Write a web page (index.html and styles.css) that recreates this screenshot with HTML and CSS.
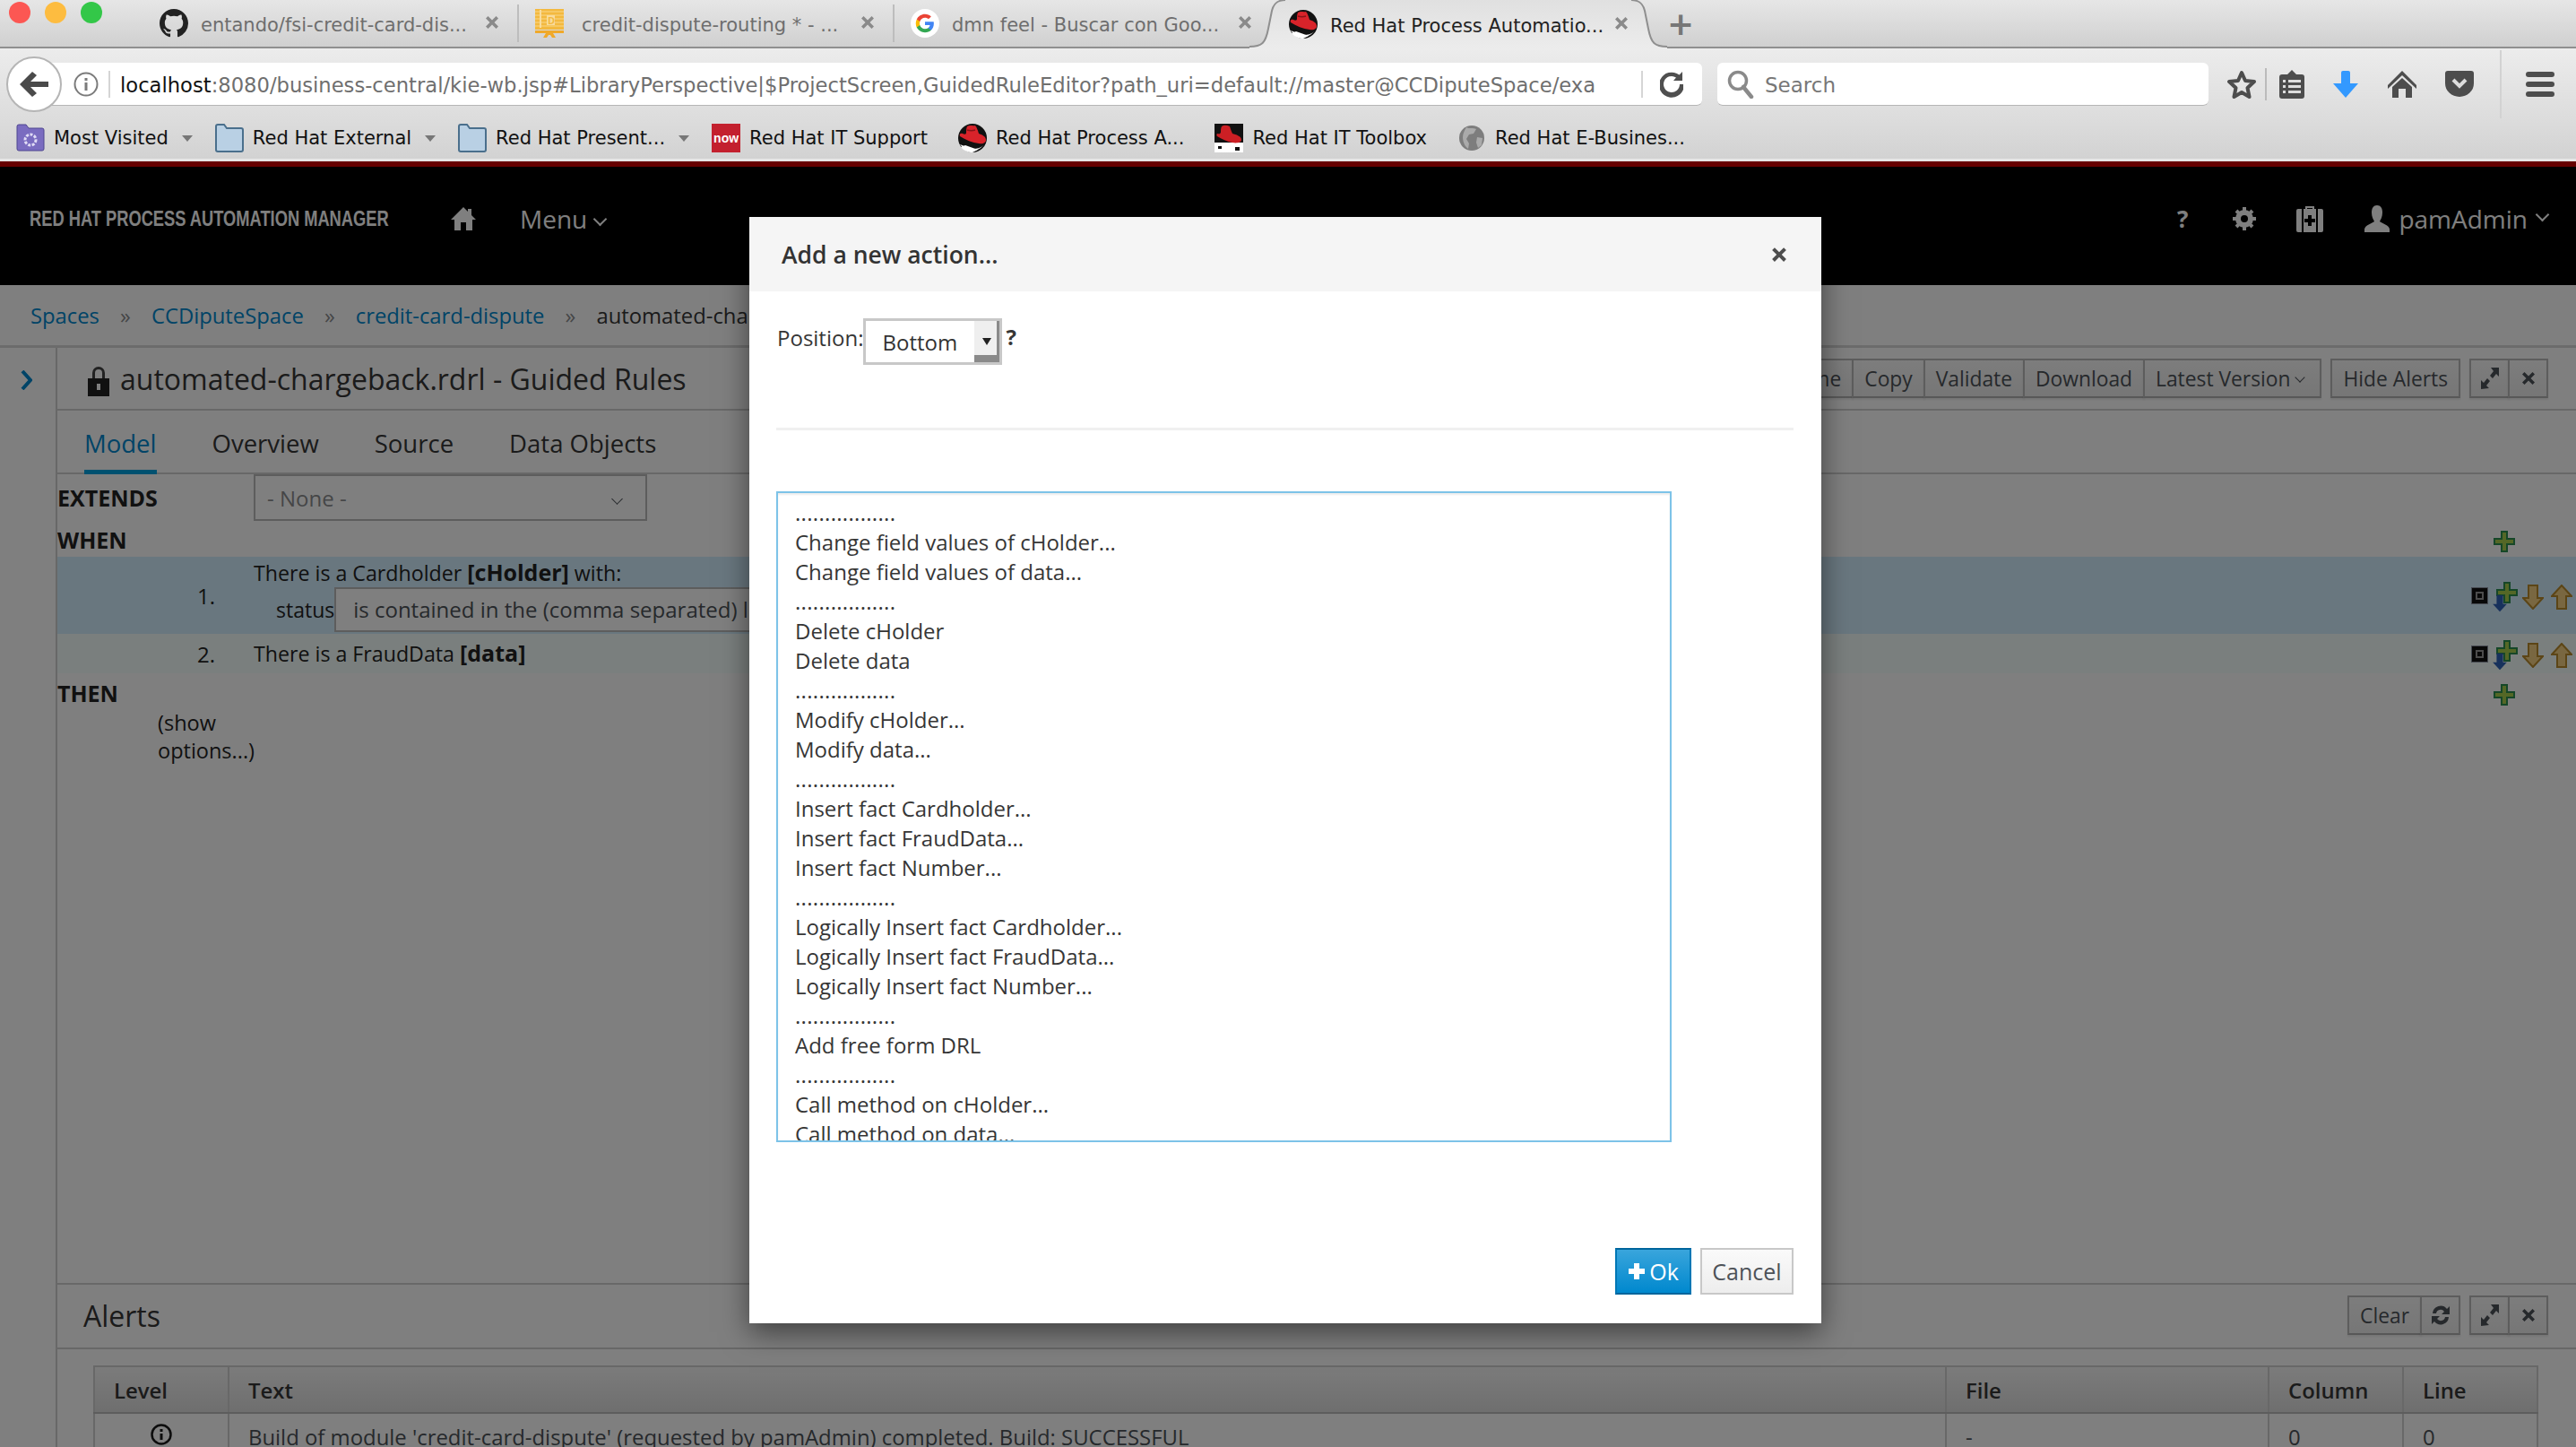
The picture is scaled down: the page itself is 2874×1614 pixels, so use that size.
FILE: index.html
```html
<!DOCTYPE html>
<html>
<head>
    <title>Red Hat Process Automation Manager</title>
    <link rel="stylesheet" href="styles.css">
</head>
<body>
    <svg class="sprite" xmlns="http://www.w3.org/2000/svg">
        <symbol id="i-github" viewBox="0 0 16 16">
            <path fill="#222" d="M8 0C3.58 0 0 3.58 0 8c0 3.54 2.29 6.53 5.47 7.59.4.07.55-.17.55-.38 0-.19-.01-.82-.01-1.49-2.01.37-2.53-.49-2.69-.94-.09-.23-.48-.94-.82-1.13-.28-.15-.68-.52-.01-.53.63-.01 1.08.58 1.23.82.72 1.21 1.87.87 2.33.66.07-.52.28-.87.51-1.07-1.78-.2-3.64-.89-3.64-3.95 0-.87.31-1.59.82-2.15-.08-.2-.36-1.02.08-2.12 0 0 .67-.21 2.2.82.64-.18 1.32-.27 2-.27.68 0 1.36.09 2 .27 1.53-1.04 2.2-.82 2.2-.82.44 1.1.16 1.92.08 2.12.51.56.82 1.27.82 2.15 0 3.07-1.87 3.75-3.65 3.95.29.25.54.73.54 1.48 0 1.07-.01 1.93-.01 2.2 0 .21.15.46.55.38A8.013 8.013 0 0016 8c0-4.42-3.58-8-8-8z"/>
        </symbol>
        <symbol id="i-slides" viewBox="0 0 32 32">
            <rect x="0" y="0" width="32" height="23" fill="#f3b93f"/>
            <path d="M0 3h32M0 7h32M0 11h32M0 15h32M0 19h32" stroke="#f7cd72" stroke-width="1.500"/>
            <rect x="5" y="1" width="2" height="20" fill="#f9dc9c"/>
            <rect x="13" y="7" width="9" height="11" fill="#f9dc9c"/>
            <text x="14" y="17" font-size="11" font-weight="bold" font-family="Open Sans" fill="#f3b93f">D</text>
            <rect x="0" y="24" width="32" height="3" fill="#f0a92a"/>
            <path d="M12 27l-3 5h4l2-3h2l2 3h4l-3-5z" fill="#f0a92a"/>
        </symbol>
        <symbol id="i-google" viewBox="0 0 48 48">
            <circle cx="24" cy="24" r="24" fill="#fff"/>
            <g transform="translate(7.2 7.2) scale(.7)">
                <path fill="#4285f4" d="M45.12 24.5c0-1.56-.14-3.06-.4-4.5H24v8.51h11.84c-.51 2.75-2.06 5.08-4.39 6.64v5.52h7.11c4.16-3.83 6.56-9.47 6.56-16.17z"/>
                <path fill="#34a853" d="M24 46c5.94 0 10.92-1.97 14.56-5.33l-7.11-5.52c-1.97 1.32-4.49 2.1-7.45 2.1-5.73 0-10.58-3.87-12.31-9.07H4.34v5.7C7.96 41.07 15.4 46 24 46z"/>
                <path fill="#fbbc05" d="M11.69 28.18C11.25 26.86 11 25.45 11 24s.25-2.86.69-4.18v-5.7H4.34C2.85 17.09 2 20.45 2 24c0 3.55.85 6.91 2.34 9.88l7.35-5.7z"/>
                <path fill="#ea4335" d="M24 10.75c3.23 0 6.13 1.11 8.41 3.29l6.31-6.31C34.91 4.18 29.93 2 24 2 15.4 2 7.96 6.93 4.34 14.12l7.35 5.7c1.73-5.2 6.58-9.07 12.31-9.07z"/>
            </g>
        </symbol>
        <symbol id="i-redhat" viewBox="0 0 32 32">
            <circle cx="16" cy="16" r="16" fill="#111"/>
            <path d="M2 23c5 2 10 4 15 5 4 0 8-1 11-4a16 16 0 0 1-26-1z" fill="#fff"/>
            <path d="M3 26l5-2 14 5-6 3c-5 0-10-2-13-6z" fill="#fff"/>
            <path d="M10 3c3-2 6 0 9-1 2 2 3 6 4 9 3 1 8 3 8 7 0 3-3 5-8 4-7-1-15-4-21-8-1-3 1-4 3-3 2 1 4 1 4-1 0-2 0-5 1-7z" fill="#d8232a"/>
            <path d="M10 7c3 1 6 1 9 0" fill="none" stroke="#8a1418" stroke-width="1.500"/>
        </symbol>
        <symbol id="i-redhat-square" viewBox="0 0 32 32">
            <rect width="32" height="32" fill="#111"/>
            <path d="M0 21h32v11H0z" fill="#fff"/>
            <path d="M23 26h5v4h-5zM4 25h4v3H4z" fill="#111"/>
            <path d="M8 3c3-2 6-1 9 0 1 3 2 6 3 8 4 1 10 3 10 7 0 3-5 4-10 3-6-1-12-4-17-7-1-1-1-3 1-3 1 1 3 0 3-2 0-2 0-4 1-6z" fill="#cc1f24"/>
        </symbol>
        <symbol id="i-home" viewBox="0 0 28 28">
            <path d="M14 1L0 15h4v12h7v-9h6v9h7V15h4l-5-5V3h-4v3z"/>
        </symbol>
        <symbol id="i-plus" viewBox="0 0 24 24">
            <path d="M9 1h6v8h8v6h-8v8H9v-8H1V9h8z" fill="#a9cf4d" stroke="#2d8f50" stroke-width="2"/>
        </symbol>
        <symbol id="i-down" viewBox="0 0 24 28">
            <path d="M7 1h10v14h6L12 27 1 15h6z" fill="#f3cf83" stroke="#b88a2c" stroke-width="2"/>
        </symbol>
        <symbol id="i-expand" viewBox="0 0 22 26">
            <path d="M12 1h9v10l-3-3-4 5-3-3 4-5zM1 25v-10l3 3 4-5 3 3-4 5 3 3z" fill="#4d5258"/>
        </symbol>
        <symbol id="i-close" viewBox="0 0 16 16">
            <path d="M1 3.500L3.500 1 8 5.500 12.500 1 15 3.500 10.500 8 15 12.500 12.500 15 8 10.500 3.500 15 1 12.500 5.500 8z"/>
        </symbol>
        <symbol id="i-folder" viewBox="0 0 32 32">
            <path d="M1 3a2 2 0 0 1 2-2h7l3 4h16a2 2 0 0 1 2 2v22a2 2 0 0 1-2 2H3a2 2 0 0 1-2-2z" fill="#b9d0e4" stroke="#4a6f8c" stroke-width="2"/>
        </symbol>
    </svg>

    <div class="browser">
        <div class="tabstrip">
            <div class="lights">
                <span class="light light-red"></span>
                <span class="light light-yellow"></span>
                <span class="light light-green"></span>
            </div>
            <div class="tab tab-first">
                <svg class="tab-icon"><use href="#i-github"/></svg>
                <span class="tab-title">entando/fsi-credit-card-dis...</span>
                <svg class="tab-close"><use href="#i-close"/></svg>
            </div>
            <div class="tab">
                <svg class="tab-icon"><use href="#i-slides"/></svg>
                <span class="tab-title tab-title-wide">credit-dispute-routing * - ...</span>
                <svg class="tab-close"><use href="#i-close"/></svg>
            </div>
            <div class="tab tab-plain">
                <svg class="tab-icon"><use href="#i-google"/></svg>
                <span class="tab-title">dmn feel - Buscar con Goo...</span>
                <svg class="tab-close"><use href="#i-close"/></svg>
            </div>
            <div class="tab tab-active">
                <svg class="tab-shape" viewBox="0 0 466 54" preserveAspectRatio="none">
                    <defs>
                        <linearGradient id="tabfill" x1="0" y1="0" x2="0" y2="1">
                            <stop offset="0" stop-color="#e0e0e0"/>
                            <stop offset="1" stop-color="#ececec"/>
                        </linearGradient>
                    </defs>
                    <path d="M0 52c14 0 18-4 21-20l4-20C27 4 31 0 40 0h386c9 0 13 4 15 12l4 20c3 16 7 20 21 20v2H0z" fill="url(#tabfill)"/>
                    <path d="M0 52c14 0 18-4 21-20l4-20C27 4 31 0 40 0M426 0c9 0 13 4 15 12l4 20c3 16 7 20 21 20" fill="none" stroke="#8f8f8f" stroke-width="2"/>
                </svg>
                <svg class="tab-icon"><use href="#i-redhat"/></svg>
                <span class="tab-title">Red Hat Process Automatio...</span>
                <svg class="tab-close"><use href="#i-close"/></svg>
            </div>
            <span class="new-tab">+</span>
        </div>

        <div class="navbar">
            <div class="back-btn">
                <svg width="36" height="32" viewBox="0 0 36 32"><path d="M16 2l5 4-7 7h20v6H14l7 7-5 4L2 16z" fill="#4a4a4a"/></svg>
            </div>
            <div class="urlbar">
                <svg class="info-icon" width="28" height="28" viewBox="0 0 28 28"><circle cx="14" cy="14" r="12.500" fill="none" stroke="#7b7b7b" stroke-width="2"/><path d="M12.500 7h3v3h-3zM12.500 12h3v9h-3z" fill="#7b7b7b"/></svg>
                <span class="url-sep"></span>
                <span class="url-text"><b>localhost</b>:8080/business-central/kie-wb.jsp#LibraryPerspective|$ProjectScreen,GuidedRuleEditor?path_uri=default://master@CCDiputeSpace/example</span>
                <span class="url-sep url-sep-right"></span>
                <svg class="reload-icon" width="26" height="30" viewBox="0 0 26 30"><path d="M22 15a9 9 0 1 1-4-7.500L15 11h10V1l-3.500 3.500A14 14 0 1 0 27 15z" fill="#4f4f4f"/></svg>
            </div>
            <div class="searchbar">
                <svg width="30" height="32" viewBox="0 0 30 32"><circle cx="12" cy="12" r="9.500" fill="none" stroke="#8a8a8a" stroke-width="3.500"/><path d="M18 19l9 11" stroke="#8a8a8a" stroke-width="4.500" stroke-linecap="round"/></svg>
                <span>Search</span>
            </div>
            <div class="nav-icons">
                <svg class="nav-star" width="32" height="32" viewBox="0 0 32 32"><path d="M16 3l4 9 10 1-7.500 7 2 10L16 25l-8.500 5 2-10L2 13l10-1z" fill="none" stroke="#4d4d4d" stroke-width="4" stroke-linejoin="round"/></svg>
                <span class="nav-sep"></span>
                <svg class="nav-list" width="28" height="32" viewBox="0 0 28 32"><path d="M14 0l5 5h6a3 3 0 0 1 3 3v21a3 3 0 0 1-3 3H3a3 3 0 0 1-3-3V8a3 3 0 0 1 3-3h6z" fill="#4d4d4d"/><path d="M4 11h3v3H4zM10 11h14v3H10zM4 17h3v3H4zM10 17h14v3H10zM4 23h3v3H4zM10 23h14v3H10z" fill="#ddd"/></svg>
                <svg class="nav-down" width="30" height="30" viewBox="0 0 30 30"><path d="M10 2a2 2 0 0 1 2-2h6a2 2 0 0 1 2 2v12h9L15 30 1 14h9z" fill="#3399ff"/></svg>
                <svg class="nav-home" width="32" height="30" viewBox="0 0 32 30"><path d="M16 0L0 16v4L16 5l16 15v-4zM16 8L5 18v12h7V20h8v10h7V18z" fill="#4d4d4d"/></svg>
                <svg class="nav-pocket" width="32" height="30" viewBox="0 0 32 30"><path d="M3 0h26a3 3 0 0 1 3 3v11a16 15 0 0 1-32 0V3a3 3 0 0 1 3-3z" fill="#4d4d4d"/><path d="M9 10l7 7 7-7" fill="none" stroke="#ddd" stroke-width="4"/></svg>
                <span class="nav-sep nav-sep-tall"></span>
                <div class="hamburger"><span></span><span></span><span></span></div>
            </div>
        </div>

        <div class="bookmarks">
            <div class="bookmark bookmark-menu">
                <svg class="bm-icon" viewBox="0 0 32 32"><path d="M1 3a2 2 0 0 1 2-2h8l3 4h15a2 2 0 0 1 2 2v21a2 2 0 0 1-2 2H3a2 2 0 0 1-2-2z" fill="#7a6cc0" stroke="#4f4690"/><circle cx="16" cy="18" r="6" fill="none" stroke="#e0dcf5" stroke-width="3" stroke-dasharray="3 1.500"/></svg>
                <span>Most Visited</span><i class="caret"></i>
            </div>
            <div class="bookmark bookmark-menu">
                <svg class="bm-icon"><use href="#i-folder"/></svg>
                <span>Red Hat External</span><i class="caret"></i>
            </div>
            <div class="bookmark bookmark-menu">
                <svg class="bm-icon"><use href="#i-folder"/></svg>
                <span>Red Hat Present...</span><i class="caret"></i>
            </div>
            <div class="bookmark">
                <span class="now-icon">now</span>
                <span>Red Hat IT Support</span>
            </div>
            <div class="bookmark">
                <svg class="bm-icon"><use href="#i-redhat"/></svg>
                <span>Red Hat Process A...</span>
            </div>
            <div class="bookmark">
                <svg class="bm-icon"><use href="#i-redhat-square"/></svg>
                <span>Red Hat IT Toolbox</span>
            </div>
            <div class="bookmark">
                <svg class="bm-icon" viewBox="0 0 32 32"><circle cx="16" cy="16" r="14" fill="#7d7d7d"/><path d="M10 4c3 2 8 0 11 2l-3 5-5 1-3 5 3 5-1 6c-4-3-6-8-6-13 0-4 2-8 4-11zM22 15l6 1-1 8-4 3-2-6z" fill="#aaa"/></svg>
                <span>Red Hat E-Busines...</span>
            </div>
        </div>
    </div>

    <div class="app">
        <div class="masthead">
            <span class="brand">RED HAT PROCESS AUTOMATION MANAGER</span>
            <svg class="mast-home"><use href="#i-home"/></svg>
            <span class="mast-menu">Menu<i class="chev"></i></span>
            <div class="mast-right">
                <span class="mast-help">?</span>
                <svg class="mast-gear" width="26" height="26" viewBox="0 0 26 26"><circle cx="13" cy="13" r="7" fill="none" stroke="#fff" stroke-width="6"/><path d="M13 0v26M0 13h26M4 4l18 18M22 4L4 22" stroke="#fff" stroke-width="4" stroke-dasharray="5 16 5 0"/></svg>
                <svg class="mast-case" width="30" height="30" viewBox="0 0 30 30"><path d="M10 4V1h10v3h8a2 2 0 0 1 2 2v22a2 2 0 0 1-2 2H2a2 2 0 0 1-2-2V6a2 2 0 0 1 2-2zm2 0h6V3h-6zM6 4v26h2V4zM22 4v26h2V4zM13 11v4H9v4h4v4h4v-4h4v-4h-4v-4z" fill="#fff" fill-rule="evenodd"/></svg>
                <span class="mast-user">
                    <svg width="28" height="30" viewBox="0 0 28 30"><path d="M14 0c4 0 6 3 6 8s-2 8-3 10c2 2 11 4 11 9v3H0v-3c0-5 9-7 11-9-1-2-3-5-3-10s2-8 6-8z" fill="#fff"/></svg>
                    pamAdmin<i class="chev"></i>
                </span>
            </div>
        </div>

        <div class="crumbs">
            <a>Spaces</a><span class="crumb-sep">&raquo;</span>
            <a>CCDiputeSpace</a><span class="crumb-sep">&raquo;</span>
            <a>credit-card-dispute</a><span class="crumb-sep">&raquo;</span>
            <span class="crumb-current">automated-chargeback.rdrl</span>
        </div>

        <div class="workbench">
            <div class="rail">
                <svg width="14" height="22" viewBox="0 0 14 22"><path d="M3 1l9 10-9 10" fill="none" stroke="#0088ce" stroke-width="4"/></svg>
            </div>
            <div class="editor">
                <div class="title-row">
                    <svg class="lock" width="24" height="34" viewBox="0 0 24 34"><path d="M5 14V8a7 7 0 0 1 14 0v6h-3V8a4 4 0 0 0-8 0v6z" fill="#444"/><path d="M0 14h24v20H0zM10 20v7h4v-7z" fill="#222" fill-rule="evenodd"/></svg>
                    <span class="doc-title">automated-chargeback.rdrl - Guided Rules</span>
                    <div class="toolbar">
                        <div class="btn-group">
                            <span class="btn">Rename</span><span class="btn">Copy</span><span class="btn">Validate</span><span class="btn">Download</span><span class="btn">Latest Version<i class="chev chev-dark"></i></span>
                        </div>
                        <span class="btn">Hide Alerts</span>
                        <div class="btn-group">
                            <span class="btn btn-icon"><svg width="22" height="26"><use href="#i-expand"/></svg></span><span class="btn btn-icon"><svg class="x-icon" width="16" height="16"><use href="#i-close"/></svg></span>
                        </div>
                    </div>
                </div>

                <div class="tabs">
                    <span class="tabs-item tabs-item-on">Model</span>
                    <span class="tabs-item">Overview</span>
                    <span class="tabs-item">Source</span>
                    <span class="tabs-item">Data Objects</span>
                </div>

                <div class="rule">
                    <div class="rule-extends">
                        <b class="rule-label">EXTENDS</b>
                        <div class="none-select">- None -<i class="chev chev-dark"></i></div>
                    </div>
                    <div class="rule-heading">
                        <b class="rule-label">WHEN</b>
                        <svg class="rule-add" width="24" height="24"><use href="#i-plus"/></svg>
                    </div>
                    <div class="rule-line rule-line-blue">
                        <span class="rule-num">1.</span>
                        <div class="rule-body">
                            <div class="rule-text">There is a Cardholder <b>[cHolder]</b> with:</div>
                            <div class="rule-field">
                                <span class="rule-field-name">status</span>
                                <div class="rule-input">is contained in the (comma separated) list</div>
                            </div>
                        </div>
                        <div class="rule-actions">
                            <span class="mini-minus"></span>
                            <span class="plus-down">
                                <svg class="pd-plus" width="24" height="24"><use href="#i-plus"/></svg>
                                <svg class="pd-arrow" width="18" height="20" viewBox="0 0 24 28"><path d="M7 1h10v14h6L12 27 1 15h6z" fill="#2f62b8"/></svg>
                            </span>
                            <svg class="arrow-down" width="24" height="28"><use href="#i-down"/></svg>
                            <svg class="arrow-up" width="24" height="28"><use href="#i-down"/></svg>
                        </div>
                    </div>
                    <div class="rule-line rule-line-green">
                        <span class="rule-num">2.</span>
                        <div class="rule-body">
                            <div class="rule-text">There is a FraudData <b>[data]</b></div>
                        </div>
                        <div class="rule-actions">
                            <span class="mini-minus"></span>
                            <span class="plus-down">
                                <svg class="pd-plus" width="24" height="24"><use href="#i-plus"/></svg>
                                <svg class="pd-arrow" width="18" height="20" viewBox="0 0 24 28"><path d="M7 1h10v14h6L12 27 1 15h6z" fill="#2f62b8"/></svg>
                            </span>
                            <svg class="arrow-down" width="24" height="28"><use href="#i-down"/></svg>
                            <svg class="arrow-up" width="24" height="28"><use href="#i-down"/></svg>
                        </div>
                    </div>
                    <div class="rule-heading rule-heading-then">
                        <b class="rule-label">THEN</b>
                        <svg class="rule-add" width="24" height="24"><use href="#i-plus"/></svg>
                    </div>
                    <div class="rule-options">(show options...)</div>
                </div>

                <div class="alerts">
                    <div class="alerts-head">
                        <span class="alerts-title">Alerts</span>
                        <div class="toolbar">
                            <div class="btn-group">
                                <span class="btn">Clear</span><span class="btn btn-icon"><svg width="24" height="26" viewBox="0 0 24 26"><path d="M3 11a9 9 0 0 1 16-5l3-3v9h-9l3-3a5 5 0 0 0-9 2zM21 15a9 9 0 0 1-16 5l-3 3v-9h9l-3 3a5 5 0 0 0 9-2z" fill="#4d5258"/></svg></span>
                            </div>
                            <div class="btn-group">
                                <span class="btn btn-icon"><svg width="22" height="26"><use href="#i-expand"/></svg></span><span class="btn btn-icon"><svg class="x-icon" width="16" height="16"><use href="#i-close"/></svg></span>
                            </div>
                        </div>
                    </div>
                    <table class="alerts-table">
                        <tr>
                            <th class="col-level">Level</th>
                            <th>Text</th>
                            <th class="col-file">File</th>
                            <th class="col-num">Column</th>
                            <th class="col-num">Line</th>
                        </tr>
                        <tr>
                            <td class="cell-center"><svg width="24" height="24" viewBox="0 0 24 24"><circle cx="12" cy="12" r="10.500" fill="none" stroke="#1b1b1b" stroke-width="2.500"/><path d="M10.500 6h3v3h-3zM10.500 11h3v7h-3z" fill="#1b1b1b"/></svg></td>
                            <td>Build of module 'credit-card-dispute' (requested by pamAdmin) completed. Build: SUCCESSFUL</td>
                            <td>-</td>
                            <td>0</td>
                            <td>0</td>
                        </tr>
                    </table>
                </div>
            </div>
        </div>

        <div class="backdrop">
            <div class="modal">
                <div class="modal-head">
                    <span class="modal-title">Add a new action...</span>
                    <svg class="modal-x" width="18" height="18"><use href="#i-close"/></svg>
                </div>
                <div class="modal-body">
                    <div class="position-row">
                        <span class="position-label">Position:</span>
                        <div class="old-select">
                            <span class="old-select-value">Bottom</span>
                            <span class="old-select-btn"></span>
                        </div>
                        <b class="position-help">?</b>
                    </div>
                    <div class="modal-rule"></div>
                    <div class="listbox">
                        <div class="opt opt-sep">.................</div>
                        <div class="opt">Change field values of cHolder...</div>
                        <div class="opt">Change field values of data...</div>
                        <div class="opt opt-sep">.................</div>
                        <div class="opt">Delete cHolder</div>
                        <div class="opt">Delete data</div>
                        <div class="opt opt-sep">.................</div>
                        <div class="opt">Modify cHolder...</div>
                        <div class="opt">Modify data...</div>
                        <div class="opt opt-sep">.................</div>
                        <div class="opt">Insert fact Cardholder...</div>
                        <div class="opt">Insert fact FraudData...</div>
                        <div class="opt">Insert fact Number...</div>
                        <div class="opt opt-sep">.................</div>
                        <div class="opt">Logically Insert fact Cardholder...</div>
                        <div class="opt">Logically Insert fact FraudData...</div>
                        <div class="opt">Logically Insert fact Number...</div>
                        <div class="opt opt-sep">.................</div>
                        <div class="opt">Add free form DRL</div>
                        <div class="opt opt-sep">.................</div>
                        <div class="opt">Call method on cHolder...</div>
                        <div class="opt">Call method on data...</div>
                    </div>
                    <div class="modal-foot">
                        <span class="btn-ok"><svg width="20" height="20" viewBox="0 0 20 20"><path d="M7 1h6v6h6v6h-6v6H7v-6H1V7h6z" fill="#fff"/></svg>Ok</span>
                        <span class="btn-cancel">Cancel</span>
                    </div>
                </div>
            </div>
        </div>
    </div>
</body>
</html>
```

FILE: styles.css
```css
* {
    box-sizing: border-box;
}

html, body {
    margin: 0;
    height: 100%;
    overflow: hidden;
}

body {
    font-family: "Open Sans", sans-serif;
    background-color: white;
    display: flex;
    flex-direction: column;
}

.sprite {
    width: 0;
    height: 0;
    position: absolute;
}

/* Browser chrome */
.browser {
    height: 180px;
    flex: none;
    font-family: "DejaVu Sans", sans-serif;
    font-size: 21px;
}

.tabstrip {
    height: 54px;
    display: flex;
    align-items: center;
    background: linear-gradient(#e6e6e6, #d0d0d0);
    border-bottom: 2px solid #8f8f8f;
    position: relative;
}

.lights {
    width: 160px;
    flex: none;
    display: flex;
    gap: 16px;
    padding-left: 10px;
    margin-top: -24px;
}

.light {
    width: 24px;
    height: 24px;
    border-radius: 50%;
}

.light-red { background-color: #fc5753; }
.light-yellow { background-color: #fdbc40; }
.light-green { background-color: #33c748; }

.tab {
    width: 419px;
    height: 42px;
    flex: none;
    display: flex;
    align-items: center;
    padding: 0 20px 0 18px;
    border-right: 2px solid #bdbdbd;
    color: #6e6e6e;
    position: relative;
}

.tab-plain {
    border-right: none;
}

.tab-icon {
    width: 32px;
    height: 32px;
    flex: none;
}

.tab-title {
    flex: 1;
    margin-left: 14px;
    padding-top: 3px;
    white-space: nowrap;
    overflow: hidden;
}

.tab-title-wide {
    margin-left: 20px;
}

.tab-close {
    width: 16px;
    height: 16px;
    flex: none;
    fill: #8a8a8a;
    margin-top: -2px;
}

.tab-active {
    width: 466px;
    margin-left: -23px;
    padding: 0 43px 0 44px;
    height: 54px;
    border: none;
    color: #222;
    margin-bottom: -2px;
}

.tab-shape {
    position: absolute;
    left: 0;
    top: 0;
    width: 100%;
    height: 54px;
}

.tab-active .tab-icon, .tab-active .tab-title, .tab-active .tab-close {
    position: relative;
}

.new-tab {
    font-size: 36px;
    color: #777;
    margin-left: 0;
    font-weight: bold;
}

.navbar {
    height: 80px;
    display: flex;
    align-items: center;
    background: linear-gradient(#ececec, #dcdcdc);
    padding-left: 7px;
}

.back-btn {
    width: 62px;
    height: 62px;
    flex: none;
    border-radius: 50%;
    background-color: white;
    border: 2px solid #b5b5b5;
    display: flex;
    align-items: center;
    justify-content: center;
    position: relative;
    z-index: 1;
}

.urlbar {
    width: 1852px;
    height: 48px;
    flex: none;
    margin-left: -22px;
    padding-left: 30px;
    display: flex;
    align-items: center;
    background-color: white;
    border-bottom: 1px solid #b5b5b5;
    border-radius: 0 6px 6px 0;
}

.info-icon {
    flex: none;
    margin-left: 5px;
}

.url-sep {
    width: 2px;
    height: 30px;
    background-color: #d5d5d5;
    margin-left: 11px;
    flex: none;
}

.url-text {
    width: 1645px;
    flex: none;
    margin-left: 11px;
    padding-top: 2px;
    font-size: 22.65px;
    white-space: nowrap;
    overflow: hidden;
    color: #6f6f6f;
}

.url-text b {
    color: #111;
    font-weight: normal;
}

.url-sep-right {
    margin-left: 52px;
}

.reload-icon {
    margin-left: 19px;
    flex: none;
}

.searchbar {
    width: 548px;
    height: 48px;
    flex: none;
    margin-left: 17px;
    padding-left: 11px;
    display: flex;
    align-items: center;
    gap: 12px;
    background-color: white;
    border-bottom: 1px solid #b5b5b5;
    border-radius: 6px;
    color: #777;
    font-size: 23px;
}

.searchbar span {
    padding-top: 2px;
}

.nav-icons {
    display: flex;
    align-items: center;
    padding-left: 21px;
}

.nav-sep {
    width: 2px;
    height: 36px;
    background-color: #bbb;
    margin-left: 10px;
}

.nav-list { margin-left: 14px; }
.nav-down { margin-left: 31px; }
.nav-home { margin-left: 32px; }
.nav-pocket { margin-left: 32px; }

.nav-sep-tall {
    height: 76px;
    margin-left: 29px;
    background-color: #d2d2d2;
}

.hamburger {
    margin-left: 27px;
    display: flex;
    flex-direction: column;
    gap: 5px;
}

.hamburger span {
    display: block;
    width: 32px;
    height: 6px;
    border-radius: 3px;
    background-color: #4d4d4d;
}

.bookmarks {
    height: 46px;
    display: flex;
    align-items: center;
    padding: 0 0 3px 18px;
    gap: 34px;
    background: linear-gradient(#dcdcdc, #d2d2d2);
    border-bottom: 3px solid #e6e6e6;
    color: #111;
    font-size: 21px;
}

.bookmark {
    display: flex;
    align-items: center;
    gap: 10px;
    white-space: nowrap;
}

.bookmark-menu {
    margin-right: -9px;
}

.bm-icon {
    width: 32px;
    height: 32px;
    flex: none;
}

.caret {
    width: 0;
    height: 0;
    margin-left: 5px;
    border-left: 6px solid transparent;
    border-right: 6px solid transparent;
    border-top: 7px solid #777;
}

.now-icon {
    width: 32px;
    height: 32px;
    flex: none;
    background-color: #c3202e;
    color: white;
    font-family: "Liberation Sans", sans-serif;
    font-size: 14px;
    font-weight: bold;
    line-height: 32px;
    text-align: center;
}

/* Application */
.app {
    flex: 1;
    min-height: 0;
    display: flex;
    flex-direction: column;
    position: relative;
    overflow: hidden;
    color: #363636;
    font-size: 24px;
}

.masthead {
    height: 138px;
    flex: none;
    display: flex;
    align-items: center;
    padding: 0 32px 16px 33px;
    background-color: black;
    border-top: 6px solid #cc0000;
    color: white;
}

/* no narrow face installed, so squeeze the bold one */
.brand {
    font-family: "Liberation Sans", sans-serif;
    font-size: 24px;
    font-weight: bold;
    width: 526px;
    margin-right: -125px;
    flex: none;
    white-space: nowrap;
    transform: scaleX(0.762);
    transform-origin: left center;
}

.mast-home {
    width: 28px;
    height: 28px;
    margin-left: 69px;
    fill: white;
}

.mast-menu {
    margin-left: 49px;
    font-size: 28px;
}

.chev {
    display: inline-block;
    width: 11px;
    height: 11px;
    margin-left: 9px;
    border-right: 2px solid white;
    border-bottom: 2px solid white;
    transform: translateY(-5px) rotate(45deg);
}

.chev-dark {
    border-color: #4d5258;
}

.mast-right {
    margin-left: auto;
    display: flex;
    align-items: center;
}

.mast-help {
    font-size: 26px;
    font-weight: bold;
}

.mast-gear { margin-left: 50px; }
.mast-case { margin-left: 45px; }

.mast-user {
    margin-left: 46px;
    display: flex;
    align-items: center;
    gap: 10px;
    font-size: 28px;
}

.mast-user .chev {
    margin-left: 1px;
}

.crumbs {
    height: 70px;
    flex: none;
    display: flex;
    align-items: center;
    padding-left: 34px;
    border-bottom: 3px solid #d8d8d8;
    font-size: 23.8px;
    white-space: nowrap;
}

.crumbs a {
    color: #0088ce;
}

.crumb-sep {
    width: 58px;
    text-align: center;
    color: #8b8d8f;
}

/* the open dialog covers the rest of this one */
.crumb-current {
    width: 171px;
    overflow: hidden;
}

.workbench {
    flex: 1;
    min-height: 0;
    display: flex;
}

.rail {
    width: 64px;
    flex: none;
    padding: 21px 0 0 22px;
    border-right: 2px solid #d1d1d1;
}

.editor {
    flex: 1;
    min-width: 0;
    display: flex;
    flex-direction: column;
}

.title-row {
    height: 70px;
    flex: none;
    display: flex;
    align-items: center;
    padding: 0 31px 0 34px;
    border-bottom: 2px solid #d1d1d1;
}

.lock {
    flex: none;
    margin-top: 6px;
}

.doc-title {
    margin-left: 12px;
    font-size: 32px;
    white-space: nowrap;
}

.toolbar {
    margin-left: auto;
    display: flex;
    align-items: center;
    gap: 10px;
}

.btn-group {
    display: flex;
}

.btn-group .btn + .btn {
    margin-left: -2px;
}

.btn {
    height: 44px;
    display: flex;
    align-items: center;
    padding: 0 12px;
    font-size: 22.8px;
    color: #4d5258;
    background: linear-gradient(#fafafa, #ededed);
    border: 2px solid #bbb;
    border-bottom-color: #b0b0b0;
    white-space: nowrap;
    box-shadow: 0 2px 2px rgba(0,0,0,0.08);
}

.btn .chev {
    width: 8px;
    height: 8px;
    margin: 0 6px 0 7px;
    transform: translateY(-1px) rotate(45deg);
    border-width: 1px;
}

.btn-icon {
    justify-content: center;
    width: 45px;
    padding: 0;
}

.x-icon {
    fill: #4d5258;
}

.tabs {
    height: 71px;
    flex: none;
    display: flex;
    gap: 62px;
    padding-left: 30px;
    border-bottom: 2px solid #d1d1d1;
    font-size: 27.5px;
}

.tabs-item {
    height: 71px;
    line-height: 74px;
}

.tabs-item-on {
    color: #0088ce;
    border-bottom: 5px solid #00a3e0;
}

.rule {
    flex: 1;
    min-height: 0;
    color: #222;
}

.rule-extends {
    height: 52px;
    display: flex;
    align-items: center;
}

.rule-label {
    width: 219px;
    font-size: 25px;
    flex: none;
}

.none-select {
    width: 439px;
    height: 52px;
    display: flex;
    align-items: center;
    justify-content: space-between;
    padding: 0 27px 0 13px;
    border: 2px solid #bbb;
    color: #8b8d8f;
    font-size: 24px;
}

.none-select .chev {
    width: 9px;
    height: 9px;
    border-width: 1.500px;
    transform: translateY(1px) rotate(45deg);
}

.rule-heading {
    height: 40px;
    padding: 2px 68px 0 0;
    display: flex;
    align-items: center;
    justify-content: space-between;
}

.rule-heading .rule-add {
    margin-top: 4px;
}

.rule-heading-then {
    height: 43px;
    padding-top: 0;
}

.rule-line {
    display: flex;
    align-items: center;
}

.rule-line-blue {
    height: 86px;
    background-color: #d2eeff;
}

.rule-line-green {
    height: 44px;
    background-color: #f4fffc;
}

.rule-num {
    width: 219px;
    padding-left: 156px;
    flex: none;
}

.rule-text {
    font-size: 23.2px;
    line-height: 31px;
    white-space: nowrap;
}

.rule-text b {
    font-size: 25px;
}

.rule-field {
    height: 50px;
    display: flex;
    align-items: center;
    padding-left: 25px;
}

.rule-field-name {
    font-size: 23px;
}

.rule-input {
    width: 620px;
    height: 50px;
    display: flex;
    align-items: center;
    padding: 0 0 2px 19px;
    border: 2px solid #bbb;
    background-color: white;
    color: #4d5258;
    white-space: nowrap;
}

/* icon offsets come from the add/move icon strip in the rule editor */
.rule-actions {
    margin-left: auto;
    margin-top: 4px;
    display: flex;
    align-items: center;
    padding-right: 4px;
}

.mini-minus {
    width: 17px;
    height: 17px;
    margin-top: -4px;
    background-color: #111;
    border: 4px solid #111;
    outline: 1px solid #8a93a0;
    box-shadow: inset 0 0 0 2px #999;
}

.plus-down {
    width: 29px;
    height: 34px;
    margin-left: 5px;
    position: relative;
}

.pd-plus {
    position: absolute;
    right: 0;
    top: 0;
}

.pd-arrow {
    position: absolute;
    left: 0;
    bottom: 0;
}

.arrow-down {
    margin-left: 5px;
}

.arrow-up {
    margin-left: 8px;
    transform: rotate(180deg);
}

.rule-options {
    width: 118px;
    margin: -3px 0 0 112px;
    font-size: 23.5px;
    line-height: 31px;
}

.alerts {
    height: 183px;
    flex: none;
    border-top: 2px solid #d1d1d1;
}

.alerts-head {
    height: 72px;
    display: flex;
    align-items: center;
    padding: 0 31px 2px 29px;
    border-bottom: 2px solid #d1d1d1;
}

.alerts-title {
    font-size: 32px;
}

.alerts-table {
    width: 2728px;
    margin: 18px 0 0 40px;
    border-collapse: collapse;
    font-size: 23.9px;
    color: #4d5258;
}

.alerts-table th {
    height: 52px;
    padding: 0 21px;
    text-align: left;
    font-weight: 600;
    color: #363636;
    background: linear-gradient(#f7f7f7, #dedede);
    border: 2px solid #d1d1d1;
    border-bottom-color: #bbb;
}

.alerts-table td {
    height: 52px;
    padding: 0 21px;
    border: 2px solid #d1d1d1;
    white-space: nowrap;
}

.alerts-table .cell-center {
    text-align: center;
}

.col-level { width: 150px; }
.col-file { width: 360px; }
.col-num { width: 150px; }

/* Modal */
.backdrop {
    position: absolute;
    top: 0;
    left: 0;
    right: 0;
    bottom: 0;
    background-color: rgba(0,0,0,0.5);
}

.modal {
    width: 1196px;
    height: 1234px;
    margin: 62px 0 0 836px;
    display: flex;
    flex-direction: column;
    background-color: white;
    box-shadow: 0 10px 30px rgba(0,0,0,0.5);
}

.modal-head {
    height: 83px;
    flex: none;
    display: flex;
    align-items: center;
    justify-content: space-between;
    padding: 0 38px 0 36px;
    background-color: #f5f5f5;
}

.modal-title {
    font-size: 26.5px;
    font-weight: 600;
    color: #333;
}

.modal-x {
    fill: #4d4d4d;
}

.modal-body {
    padding: 30px 31px 0 30px;
}

.position-row {
    display: flex;
    align-items: flex-start;
}

.position-label {
    line-height: 44px;
    margin-left: 1px;
}

.old-select {
    width: 155px;
    height: 52px;
    display: flex;
    border: 3px solid #c8c8c8;
}

.old-select-value {
    flex: 1;
    padding: 7px 0 0 18px;
    color: #333;
}

.old-select-btn {
    width: 28px;
    position: relative;
    background-color: #efefef;
    border-right: 3px solid #8a8a8a;
    border-bottom: 8px solid #8a8a8a;
}

.old-select-btn::after {
    content: "";
    position: absolute;
    left: 9px;
    top: 19px;
    border-left: 5px solid transparent;
    border-right: 5px solid transparent;
    border-top: 8px solid #222;
}

.position-help {
    line-height: 42px;
    margin-left: 4px;
}

.modal-rule {
    height: 3px;
    margin-top: 70px;
    background-color: #f0f0f0;
}

.listbox {
    width: 999px;
    height: 726px;
    margin-top: 68px;
    padding: 5px 0 0 19px;
    overflow: hidden;
    border: 2px solid #7dc3e8;
    box-shadow: inset 0 2px 2px rgba(0,0,0,0.08);
    color: #363636;
}

.opt {
    height: 33px;
    line-height: 33px;
    white-space: nowrap;
}

.opt-sep {
    letter-spacing: 0.3px;
}

.modal-foot {
    margin-top: 118px;
    display: flex;
    justify-content: flex-end;
    gap: 10px;
}

.btn-ok {
    width: 85px;
    height: 52px;
    display: flex;
    align-items: center;
    justify-content: center;
    gap: 4px;
    color: white;
    background: linear-gradient(#39a5dc, #0088ce);
    border: 2px solid #00659c;
    border-left-color: #0077b5;
    border-right-color: #0077b5;
    font-size: 25px;
}

.btn-cancel {
    width: 104px;
    height: 52px;
    display: flex;
    align-items: center;
    justify-content: center;
    color: #4d5258;
    background: linear-gradient(#fafafa, #ededed);
    border: 2px solid #c8c8c8;
    font-size: 25px;
}
```
